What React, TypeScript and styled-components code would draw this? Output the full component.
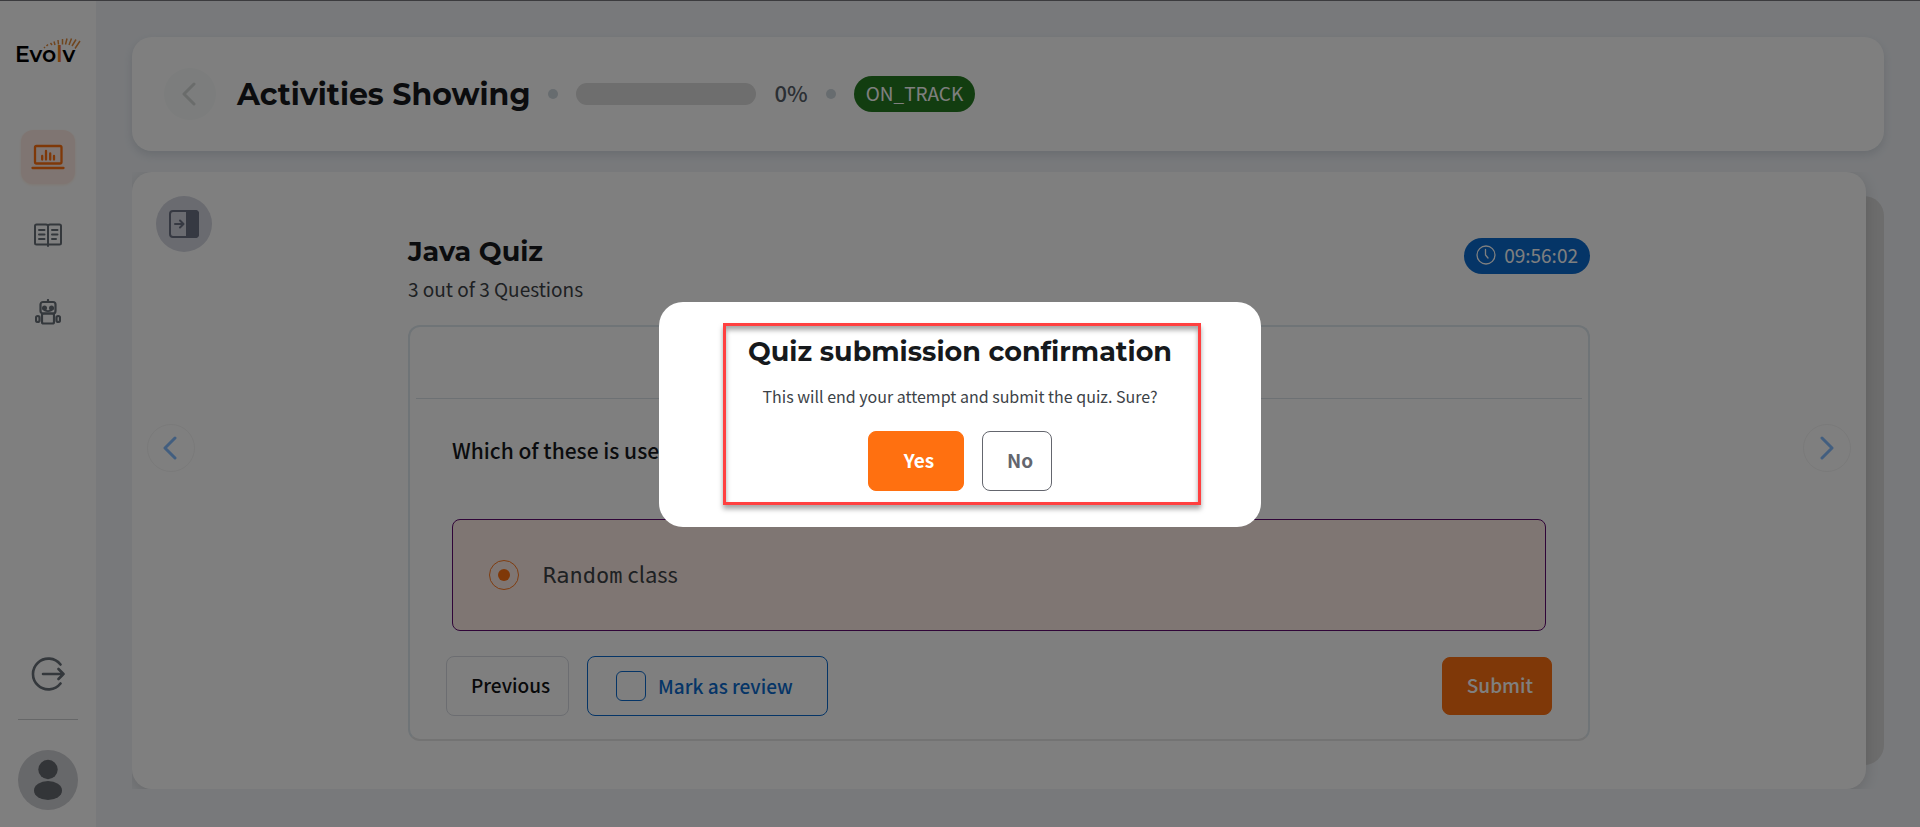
import React from 'react';
import styled, { createGlobalStyle } from 'styled-components';

const display = 'Montserrat, Inter, "Liberation Sans", sans-serif';
const body = '"Noto Sans CJK SC", "Noto Sans", sans-serif';

const GlobalStyle = createGlobalStyle`
  * { box-sizing: border-box; }
  body { margin: 0; font-family: ${body}; color: #16191c; background: #f0f3f7; }
  h1, h2, p { margin: 0; }
  button { font-family: inherit; cursor: pointer; }
`;

const Shell = styled.div`
  display: flex;
  min-height: 100vh;
  border-top: 1px solid #77777d;
`;

const Sidebar = styled.aside`
  flex: 0 0 96px;
  display: flex;
  flex-direction: column;
  align-items: center;
  padding: 34px 0 17px;
  background: #fff;
`;

const Logo = styled.a`
  position: relative;
  width: 66px;
  height: 32px;
  margin-bottom: 63px;
  color: #000;
  font: 600 22px/24px ${display};
  text-decoration: none;
`;

const LogoWord = styled.span`
  position: absolute;
  left: 0;
  bottom: 0;
`;

const LogoAccent = styled.span`
  color: #f58220;
`;

const LogoRays = styled.svg`
  position: absolute;
  right: 0;
  top: 2px;
`;

const Nav = styled.nav`
  display: flex;
  flex-direction: column;
  gap: 24px;
`;

const NavLink = styled.a<{ $active?: boolean }>`
  display: grid;
  place-items: center;
  width: 54px;
  height: 54px;
  border-radius: 12px;
  color: ${(p) => (p.$active ? '#ff7010' : '#687079')};
  background: ${(p) => (p.$active ? '#ffebe4' : 'transparent')};
  box-shadow: ${(p) => (p.$active ? '0 1px 3px rgba(255, 112, 16, 0.12)' : 'none')};
`;

const LogoutButton = styled.button`
  display: grid;
  place-items: center;
  margin-top: auto;
  width: 54px;
  height: 54px;
  padding: 0;
  border: 0;
  background: none;
  color: #687079;
`;

const SidebarRule = styled.hr`
  width: 60px;
  margin: 18px 0 30px;
  border: 0;
  border-top: 1px solid #ccced0;
`;

const Avatar = styled.button`
  width: 60px;
  height: 60px;
  padding: 0;
  border: 0;
  border-radius: 50%;
  background: #cfd0d4;
`;

const Main = styled.main`
  flex: 1;
  min-width: 0;
  display: flex;
  flex-direction: column;
  gap: 21px;
  padding: 36px 36px 38px;
`;

const Header = styled.header`
  display: flex;
  align-items: center;
  gap: 18px;
  padding: 31px 32px;
  border-radius: 20px;
  background: #fff;
  box-shadow: 0 4px 8px rgba(70, 90, 110, 0.16);
`;

const BackButton = styled.button`
  display: grid;
  place-items: center;
  width: 52px;
  height: 52px;
  margin-right: 3px;
  padding: 0;
  border: 0;
  border-radius: 50%;
  background: #f8fbfa;
  color: #d4d8d7;
`;

const PageTitle = styled.h1`
  padding-top: 1px;
  font: 700 30px/40px ${display};
`;

const Dot = styled.span`
  width: 10px;
  height: 10px;
  border-radius: 50%;
  background: #cfd8de;
`;

const ProgressTrack = styled.div`
  width: 180px;
  height: 22px;
  border-radius: 11px;
  background: #dcdcdc;
`;

const Percent = styled.span`
  padding-bottom: 4px;
  font-size: 22px;
  font-weight: 500;
  line-height: 30px;
  color: #565e68;
`;

const Pill = styled.span<{ $color: string }>`
  display: inline-flex;
  align-items: center;
  gap: 8px;
  height: 36px;
  padding: 0 12px 2px;
  border-radius: 18px;
  background: ${(p) => p.$color};
  color: #fff;
  font-size: 19px;
  line-height: 28px;
`;

const Stage = styled.div`
  position: relative;
  flex: 1;
  display: flex;
  padding-right: 18px;
  overflow: hidden;

  &::before {
    content: '';
    position: absolute;
    inset: 24px 0;
    border-radius: 20px;
    background: #dadada;
  }
`;

const QuizPanel = styled.section`
  position: relative;
  flex: 1;
  display: flex;
  justify-content: space-between;
  padding: 0 15px;
  border-radius: 20px;
  background: #fff;
  box-shadow: 0 4px 16px rgba(0, 0, 0, 0.14);
`;

const Rail = styled.div`
  flex: 0 0 65px;
  display: flex;
  flex-direction: column;
  gap: 172px;
  padding-top: 24px;
`;

const EndRail = styled(Rail)`
  align-items: flex-end;
  padding-top: 252px;
`;

const PanelToggle = styled.button`
  display: grid;
  place-items: center;
  width: 56px;
  height: 56px;
  margin-left: 9px;
  padding: 0;
  border: 0;
  border-radius: 50%;
  background: #d4d6e0;
  color: #6c7284;
`;

const ArrowButton = styled.button`
  display: grid;
  place-items: center;
  width: 48px;
  height: 48px;
  padding: 0;
  border: 1px solid #f4f4f4;
  border-radius: 50%;
  background: #fff;
  color: #84bcff;
`;

const QuizColumn = styled.div`
  flex: 0 1 1182px;
  padding: 62px 0 48px;
`;

const QuizHead = styled.div`
  display: flex;
  justify-content: space-between;
  align-items: flex-start;
  margin-bottom: 23px;
`;

const QuizTitle = styled.h2`
  margin-bottom: 6px;
  font: 700 27px/36px ${display};
`;

const QuizCount = styled.p`
  font-size: 19px;
  line-height: 26px;
  color: #3c4247;
`;

const TimerSlot = styled.div`
  display: flex;
  padding-top: 4px;
`;

const Card = styled.form`
  border: 2px solid #dfe8ee;
  border-bottom-color: #e6e6e6;
  border-radius: 12px;
`;

const CardBand = styled.div`
  height: 72px;
  margin: 0 6px;
  border-bottom: 1px solid #dbe3e9;
`;

const Question = styled.fieldset`
  margin: 0;
  padding: 36px 42px 0;
  border: 0;
`;

const Prompt = styled.legend`
  float: left;
  width: 100%;
  margin-bottom: 54px;
  padding: 0;
  font-size: 21px;
  font-weight: 500;
  line-height: 30px;
`;

const Answer = styled.label`
  clear: both;
  display: flex;
  align-items: center;
  gap: 24px;
  height: 112px;
  padding: 0 36px;
  border: 1px solid #600a70;
  border-radius: 8px;
  background: #ffece6;
  color: #3c4247;
  font-size: 22px;
  line-height: 32px;
`;

const AnswerText = styled.span`
  padding-bottom: 2px;
`;

const Radio = styled.input`
  appearance: none;
  display: grid;
  place-items: center;
  width: 30px;
  height: 30px;
  margin: 0;
  border: 1px solid #ff7a20;
  border-radius: 50%;

  &:checked::before {
    content: '';
    width: 12px;
    height: 12px;
    border-radius: 50%;
    background: #ff7010;
  }
`;

const Code = styled.code`
  font: 22px/32px "DejaVu Sans Mono", monospace;
`;

const Actions = styled.div`
  display: flex;
  align-items: center;
  gap: 18px;
  padding: 25px 36px 23px;
`;

const Button = styled.button<{ $variant?: 'solid' | 'outline' | 'muted' }>`
  height: ${(p) => (p.$variant === 'solid' ? 58 : 60)}px;
  padding: 0 18px 2px 24px;
  border: 1px solid
    ${(p) => (p.$variant === 'solid' ? '#ff7010' : p.$variant === 'muted' ? '#64666e' : '#d8dbe2')};
  border-radius: 8px;
  background: ${(p) => (p.$variant === 'solid' ? '#ff7010' : '#fff')};
  color: ${(p) => (p.$variant === 'solid' ? '#fff' : p.$variant === 'muted' ? '#64666e' : '#101214')};
  font-size: 19px;
  font-weight: 500;
  line-height: 28px;
`;

const SubmitButton = styled(Button)`
  margin-left: auto;
`;

const ReviewToggle = styled.label`
  display: flex;
  align-items: center;
  gap: 12px;
  height: 60px;
  padding: 0 34px 1px 28px;
  border: 1px solid #0a6ace;
  border-radius: 8px;
  color: #0a6ace;
  font-size: 19px;
  font-weight: 500;
  line-height: 28px;
`;

const Checkbox = styled.input`
  appearance: none;
  width: 30px;
  height: 30px;
  margin: 0;
  border: 1px solid #0a6ace;
  border-radius: 6px;
`;

const Overlay = styled.div`
  position: fixed;
  inset: 0;
  display: grid;
  place-items: center;
  padding-top: 2px;
  background: rgba(0, 0, 0, 0.5);
`;

const Dialog = styled.section`
  position: relative;
  display: flex;
  flex-direction: column;
  align-items: center;
  width: 602px;
  max-width: 100%;
  padding: 32px 24px 36px;
  border-radius: 24px;
  background: #fff;
`;

const Highlight = styled.span`
  position: absolute;
  inset: 21px 60px 22px 64px;
  border: 3px solid #ff4040;
  box-shadow: 0 4px 5px rgba(0, 0, 0, 0.35), inset 0 4px 5px rgba(0, 0, 0, 0.35);
  pointer-events: none;
`;

const DialogTitle = styled.h2`
  margin-bottom: 14px;
  font: 700 27px/36px ${display};
`;

const DialogText = styled.p`
  margin-bottom: 23px;
  font-size: 16px;
  line-height: 24px;
  color: #3c4247;
`;

const DialogActions = styled.div`
  display: flex;
  gap: 18px;
`;

const DialogButton = styled(Button)`
  height: 60px;
  font-weight: 700;
`;

const ConfirmButton = styled(DialogButton)`
  padding: 0 29px 2px 35px;
`;

const Chevron = ({ right }: { right?: boolean }) => (
  <svg width="24" height="24" viewBox="0 0 24 24" fill="none" stroke="currentColor" strokeWidth="3" strokeLinecap="round" strokeLinejoin="round">
    <path d={right ? 'M7 2 17 12 7 22' : 'M16 2 6 12 16 22'} />
  </svg>
);

export default function App() {
  return (
    <>
      <GlobalStyle />
      <Shell>
        <Sidebar>
          <Logo href="#home">
            <LogoWord>Evo<LogoAccent>l</LogoAccent>v</LogoWord>
            <LogoRays width="38" height="12" viewBox="0 0 38 12" stroke="#e08a3c" strokeWidth="1.500" fill="none">
              <path d="M1 11l1-1M3.500 9l1.500-1.500M7.500 6l1.500 2M11 4.500l1 3.500M15 3l.5 4.500M19.500 2v5.500M24 1.500l-1.500 6M28.500 1.500L26 8M33 2.500L29 9M37 4l-5 7.500" />
            </LogoRays>
          </Logo>
          <Nav>
            <NavLink $active href="#dashboard" aria-label="Dashboard">
              <svg width="34" height="26" viewBox="0 0 34 26" fill="none" stroke="currentColor" strokeWidth="2.300" strokeLinecap="round">
                <rect x="4" y="2" width="26.500" height="17.500" rx="1.500" />
                <path d="M1.500 24h31" />
                <path d="M11.200 12v3.500M15 7v8.500M19.200 9.500v6M23 12v3.500" />
              </svg>
            </NavLink>
            <NavLink href="#library" aria-label="Library">
              <svg width="28" height="24" viewBox="0 0 28 24" fill="none" stroke="currentColor" strokeWidth="2" strokeLinecap="round" strokeLinejoin="round">
                <path d="M14 3c0-1 -1-1.500-2-1.500H2.500c-1 0-1.500.5-1.500 1.500v17c0 1 .5 1.500 1.500 1.500H14h11.500c1 0 1.500-.5 1.500-1.500V3c0-1-.5-1.500-1.500-1.500H16c-1 0-2 .5-2 1.500v20" />
                <path d="M5 7h5.500M5 11.500h5.500M5 16h5.500M18 7h5.500M18 11.500h5.500M18 16h4" />
              </svg>
            </NavLink>
            <NavLink href="#assistant" aria-label="Assistant">
              <svg width="26" height="28" viewBox="0 0 26 28" fill="none" stroke="currentColor" strokeWidth="2.200" strokeLinecap="round">
                <path d="M13 1v2" />
                <rect x="5.500" y="3" width="15" height="11.500" rx="2.500" />
                <circle cx="9.500" cy="9" r="2.500" fill="currentColor" stroke="none" />
                <circle cx="16.500" cy="9" r="2.500" fill="currentColor" stroke="none" />
                <path d="M8 9.500c2 3.500 8 3.500 10 0" strokeWidth="1.600" />
                <rect x="7" y="14.500" width="12" height="10" rx="1.500" />
                <rect x="1" y="17" width="3.500" height="6" rx="1.700" />
                <rect x="21.500" y="17" width="3.500" height="6" rx="1.700" />
              </svg>
            </NavLink>
          </Nav>
          <LogoutButton type="button" aria-label="Log out">
            <svg width="34" height="34" viewBox="0 0 34 34" fill="none" stroke="currentColor" strokeWidth="2.600" strokeLinecap="round" strokeLinejoin="round">
              <path d="M29.500 7.500A15.400 15.400 0 1 0 29.500 26.500" />
              <path d="M12 17h20.500M27.500 12l5 5-5 5" />
            </svg>
          </LogoutButton>
          <SidebarRule />
          <Avatar type="button" aria-label="Profile">
            <svg width="60" height="60" viewBox="0 0 60 60" fill="#666a70">
              <circle cx="30" cy="19.500" r="9.700" />
              <ellipse cx="30" cy="40.500" rx="14" ry="9.500" />
            </svg>
          </Avatar>
        </Sidebar>
        <Main>
          <Header>
            <BackButton type="button" aria-label="Back"><Chevron /></BackButton>
            <PageTitle>Activities Showing</PageTitle>
            <Dot />
            <ProgressTrack role="progressbar" aria-valuenow={0} aria-label="Progress" />
            <Percent>0%</Percent>
            <Dot />
            <Pill $color="#247a20">ON_TRACK</Pill>
          </Header>
          <Stage>
            <QuizPanel>
              <Rail>
                <PanelToggle type="button" aria-label="Toggle panel">
                  <svg width="30" height="28" viewBox="0 0 30 28" fill="none" stroke="currentColor" strokeWidth="2" strokeLinecap="round" strokeLinejoin="round">
                    <rect x="1" y="1" width="28" height="26" rx="3" />
                    <path d="M18 1h8a3 3 0 0 1 3 3v20a3 3 0 0 1-3 3h-8z" fill="currentColor" />
                    <path d="M6 14h8M11 10.500l3.500 3.500-3.500 3.500" />
                  </svg>
                </PanelToggle>
                <ArrowButton type="button" aria-label="Previous activity"><Chevron /></ArrowButton>
              </Rail>
              <QuizColumn>
                <QuizHead>
                  <div>
                    <QuizTitle>Java Quiz</QuizTitle>
                    <QuizCount>3 out of 3 Questions</QuizCount>
                  </div>
                  <TimerSlot>
                    <Pill $color="#0a6ace">
                      <svg width="20" height="20" viewBox="0 0 20 20" fill="none" stroke="currentColor" strokeWidth="1.300" strokeLinecap="round">
                        <circle cx="10" cy="10" r="9" />
                        <path d="M9.500 4.500V10l2.500 3" />
                      </svg>
                      09:56:02
                    </Pill>
                  </TimerSlot>
                </QuizHead>
                <Card>
                  <CardBand />
                  <Question>
                    <Prompt>Which of these is used</Prompt>
                    <Answer>
                      <Radio type="radio" name="answer" defaultChecked />
                      <AnswerText><Code>Random</Code> class</AnswerText>
                    </Answer>
                  </Question>
                  <Actions>
                    <Button type="button">Previous</Button>
                    <ReviewToggle>
                      <Checkbox type="checkbox" />
                      Mark as review
                    </ReviewToggle>
                    <SubmitButton type="button" $variant="solid">Submit</SubmitButton>
                  </Actions>
                </Card>
              </QuizColumn>
              <EndRail>
                <ArrowButton type="button" aria-label="Next activity"><Chevron right /></ArrowButton>
              </EndRail>
            </QuizPanel>
          </Stage>
        </Main>
      </Shell>
      <Overlay>
        <Dialog role="dialog" aria-modal="true" aria-labelledby="confirm-title">
          <DialogTitle id="confirm-title">Quiz submission confirmation</DialogTitle>
          <DialogText>This will end your attempt and submit the quiz. Sure?</DialogText>
          <DialogActions>
            <ConfirmButton type="button" $variant="solid">Yes</ConfirmButton>
            <DialogButton type="button" $variant="muted">No</DialogButton>
          </DialogActions>
          <Highlight />
        </Dialog>
      </Overlay>
    </>
  );
}
